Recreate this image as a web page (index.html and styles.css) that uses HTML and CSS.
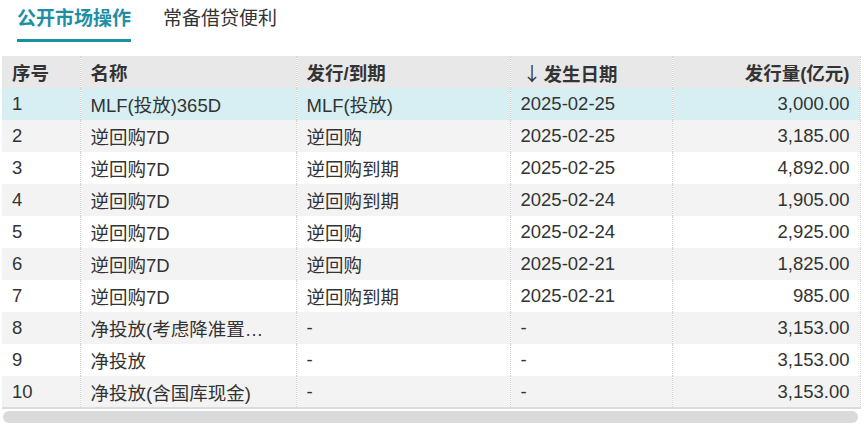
FILE: index.html
```html
<!DOCTYPE html>
<html lang="zh">
<head>
<meta charset="utf-8">
<link rel="stylesheet" href="styles.css">
</head>
<body>
<div class="page">
  <div class="tabs">
    <div class="tab active">公开市场操作</div>
    <div class="tab">常备借贷便利</div>
  </div>
  <div class="table-wrap">
    <table class="grid">
      <colgroup>
        <col class="c1"><col class="c2"><col class="c3"><col class="c4"><col class="c5">
      </colgroup>
      <thead>
        <tr><th>序号</th><th>名称</th><th>发行/到期</th><th><span class="arrow">↓</span>发生日期</th><th class="num">发行量(亿元)</th></tr>
      </thead>
      <tbody>
        <tr class="sel"><td>1</td><td>MLF(投放)365D</td><td>MLF(投放)</td><td>2025-02-25</td><td class="num">3,000.00</td></tr>
        <tr><td>2</td><td>逆回购7D</td><td>逆回购</td><td>2025-02-25</td><td class="num">3,185.00</td></tr>
        <tr><td>3</td><td>逆回购7D</td><td>逆回购到期</td><td>2025-02-25</td><td class="num">4,892.00</td></tr>
        <tr><td>4</td><td>逆回购7D</td><td>逆回购到期</td><td>2025-02-24</td><td class="num">1,905.00</td></tr>
        <tr><td>5</td><td>逆回购7D</td><td>逆回购</td><td>2025-02-24</td><td class="num">2,925.00</td></tr>
        <tr><td>6</td><td>逆回购7D</td><td>逆回购</td><td>2025-02-21</td><td class="num">1,825.00</td></tr>
        <tr><td>7</td><td>逆回购7D</td><td>逆回购到期</td><td>2025-02-21</td><td class="num">985.00</td></tr>
        <tr><td>8</td><td><span class="ellip">净投放(考虑降准置换)</span></td><td>-</td><td>-</td><td class="num">3,153.00</td></tr>
        <tr><td>9</td><td>净投放</td><td>-</td><td>-</td><td class="num">3,153.00</td></tr>
        <tr><td>10</td><td>净投放(含国库现金)</td><td>-</td><td>-</td><td class="num">3,153.00</td></tr>
      </tbody>
    </table>
    <div class="scrollbar"><div class="thumb"></div></div>
  </div>
</div>
</body>
</html>
```
FILE: styles.css
```css
* { box-sizing: border-box; }
html, body { margin: 0; padding: 0; background: #fff; }
body {
  font-family: "Liberation Sans", Arial, "Noto Sans CJK SC", sans-serif;
  color: #333;
  width: 864px;
  height: 425px;
  overflow: hidden;
}
.page { padding: 0 0 0 2px; }
.tabs {
  display: flex;
  gap: 32px;
  padding-left: 15px;
  height: 56px;
}
.tab {
  font-size: 19px;
  line-height: 22px;
  padding-top: 8px;
  height: 42px;
  color: #333;
}
.tab.active {
  color: #1d8fa5;
  font-weight: bold;
  border-bottom: 3px solid #1d8fa5;
  height: 42px;
}
.table-wrap { width: 858px; }
.grid {
  width: 858px;
  border-collapse: collapse;
  table-layout: fixed;
  font-size: 18.5px;
}
.c1 { width: 78px; }
.c2 { width: 216px; }
.c3 { width: 214px; }
.c4 { width: 162px; }
.c5 { width: 188px; }
th, td {
  height: 32px;
  padding: 0 10px;
  text-align: left;
  white-space: nowrap;
  overflow: hidden;
  border-right: 1px dotted #d4d4d4;
}
th {
  background: #e8e8e9;
  font-weight: bold;
  color: #333;
}
td { color: #333; }
.num { text-align: right; }
tbody tr:nth-child(even) td { background: #f3f3f3; }
tbody tr.sel td { background: #d7eff3; }
tbody tr:last-child td { border-bottom: 2px solid #dcdcdc; }
.arrow {
  font-family: "Noto Sans CJK SC", sans-serif;
  font-weight: normal;
  font-size: 19px;
  margin-left: 2px;
  margin-right: 2px;
}
.ellip {
  display: block;
  max-width: 178px;
  overflow: hidden;
  text-overflow: ellipsis;
}
.scrollbar {
  height: 14px;
  padding-top: 2px;
}
.thumb {
  margin-left: 1px;
  height: 12px;
  width: 855px;
  background: #dadada;
  border-radius: 6px;
}
```
